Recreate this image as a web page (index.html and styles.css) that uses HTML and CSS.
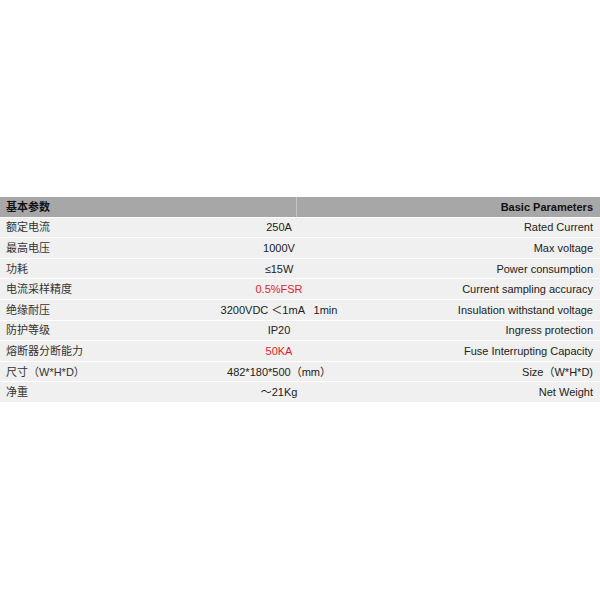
FILE: index.html
```html
<!DOCTYPE html>
<html lang="zh">
<head>
<meta charset="utf-8">
<title>基本参数</title>
<link rel="stylesheet" href="styles.css">
</head>
<body>
<div class="page">
  <div class="table">
    <div class="head">
      <div class="hcell hleft">基本参数</div>
      <div class="hcell hright">Basic Parameters</div>
    </div>
    <div class="rows">
      <div class="row"><span class="zh">额定电流</span><span class="val">250A</span><span class="en">Rated Current</span></div>
      <div class="row"><span class="zh">最高电压</span><span class="val">1000V</span><span class="en">Max voltage</span></div>
      <div class="row"><span class="zh">功耗</span><span class="val">≤15W</span><span class="en">Power consumption</span></div>
      <div class="row"><span class="zh">电流采样精度</span><span class="val red">0.5%FSR</span><span class="en">Current sampling accuracy</span></div>
      <div class="row"><span class="zh">绝缘耐压</span><span class="val">3200VDC ＜1mA &nbsp;&nbsp;1min</span><span class="en">Insulation withstand voltage</span></div>
      <div class="row"><span class="zh">防护等级</span><span class="val">IP20</span><span class="en">Ingress protection</span></div>
      <div class="row"><span class="zh">熔断器分断能力</span><span class="val red">50KA</span><span class="en">Fuse Interrupting Capacity</span></div>
      <div class="row"><span class="zh">尺寸（W*H*D）</span><span class="val">482*180*500（mm）</span><span class="en">Size（W*H*D)</span></div>
      <div class="row last"><span class="zh">净重</span><span class="val">～21Kg</span><span class="en">Net Weight</span></div>
    </div>
  </div>
</div>
</body>
</html>
```

FILE: styles.css
```css
html, body {
  margin: 0;
  padding: 0;
  background: #ffffff;
}

body {
  font-family: "Liberation Sans", "Noto Sans CJK SC", Arial, sans-serif;
  font-size: 11px;
  color: #222222;
}

.page {
  width: 600px;
  height: 600px;
  padding-top: 197px;
  box-sizing: border-box;
}

.table {
  width: 600px;
  display: flex;
  flex-direction: column;
  gap: 1px;
}

.head {
  display: grid;
  grid-template-columns: 296px 1fr;
  column-gap: 1px;
  background: #c4c4c4;
  height: 19.6px;
}

.hcell {
  background: #a7a7a7;
  font-weight: bold;
  color: #111111;
  display: flex;
  align-items: center;
  line-height: 1;
  padding-top: 1px;
}

.hleft {
  padding-left: 6px;
}

.hright {
  justify-content: flex-end;
  padding-right: 7px;
}

.rows {
  display: flex;
  flex-direction: column;
  gap: 1px;
}

.row {
  display: grid;
  grid-template-columns: 160px 238px 1fr;
  align-items: center;
  height: 19.6px;
  padding-top: 1px;
  box-sizing: border-box;
  background: #f0f0f0;
  line-height: 1;
}

.row.last {
  box-shadow: inset -303px -1px 0 0 #f0f0f0, inset 0 -1px 0 0 #d8d8d8;
}

.zh {
  padding-left: 6px;
  white-space: nowrap;
  color: #333333;
}

.val {
  text-align: center;
  white-space: nowrap;
  color: #222222;
}

.en {
  text-align: right;
  padding-right: 7px;
  white-space: nowrap;
  color: #222222;
}

.red {
  color: #e3202a;
}
```
